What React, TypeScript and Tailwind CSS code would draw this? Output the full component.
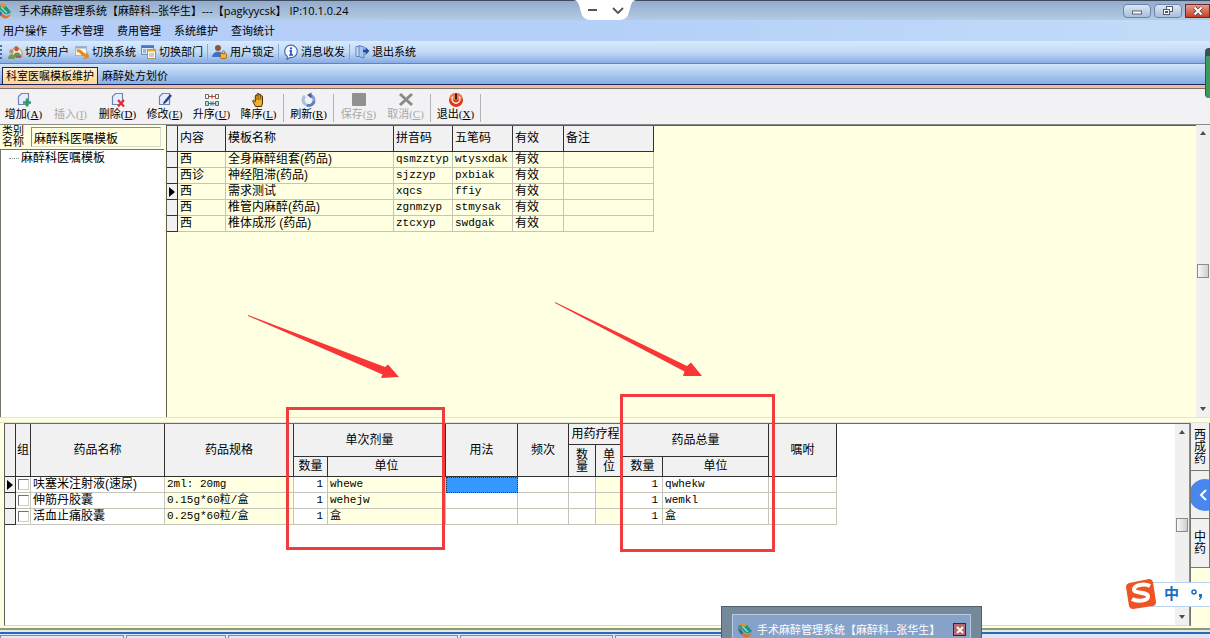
import type { ReactNode } from "react";

const MENUS = ["用户操作", "手术管理", "费用管理", "系统维护", "查询统计"];

const TEMPLATES = [
  { kind: "西", name: "全身麻醉组套(药品)", pinyin: "qsmzztyp", wubi: "wtysxdak" },
  { kind: "西诊", name: "神经阻滞(药品)", pinyin: "sjzzyp", wubi: "pxbiak" },
  { kind: "西", name: "需求测试", pinyin: "xqcs", wubi: "ffiy" },
  { kind: "西", name: "椎管内麻醉(药品)", pinyin: "zgnmzyp", wubi: "stmysak" },
  { kind: "西", name: "椎体成形 (药品)", pinyin: "ztcxyp", wubi: "swdgak" },
];

const DRUGS = [
  { name: "呋塞米注射液(速尿)", spec: "2ml: 20mg", unit: "whewe", total: "qwhekw" },
  { name: "伸筋丹胶囊", spec: "0.15g*60粒/盒", unit: "wehejw", total: "wemkl" },
  { name: "活血止痛胶囊", spec: "0.25g*60粒/盒", unit: "盒", total: "盒" },
];

const TASKS = ["w-[124px]", "w-[100px]", "w-[230px]", "w-[153px]", "w-[180px]"];

const HEAD = "border-r border-b border-[#303030] bg-[#f1f1f2] p-0 font-normal";
const CELL = "h-4 overflow-hidden border-r border-b border-[#c4c4b8] p-0 pl-0.5 whitespace-nowrap";
const MARK = "h-4 border-r border-b border-[#303030] bg-[#f1f1f2] p-0";
const MONO = "font-['Liberation_Mono','Noto_Sans_CJK_SC',monospace] text-[11px]";

/* ---------- icons ---------- */

function AppLogo() {
  return (
    <svg viewBox="0 0 16 16" className="size-4 shrink-0">
      <path d="M1 4C4 0 8 0 10 3L15 9C12 12 9 12 7 9Z" fill="#14977f" />
      <path d="M1 4C4 0 8 0 10 3L8 5C6 3 4 3 1 4Z" fill="#e8913a" />
      <path d="M1 5L7 11C10 14 13 13 15 10C14 15 9 17 6 14L2 10Z" fill="#e0702c" />
      <path d="M1 5L6 10L5 13L2 10Z" fill="#2e6d9e" />
      <path d="M5 4L11 10" stroke="#8fe0c0" strokeWidth="1.5" />
    </svg>
  );
}

function Icon({ children }: { children: ReactNode }) {
  return (
    <svg viewBox="0 0 16 16" className="size-4 shrink-0" fill="none">
      {children}
    </svg>
  );
}

const swapUser = (
  <Icon>
    <path d="M4 7l5-5 6 5v6H6Z" fill="#f4e6d4" stroke="#c08a6c" />
    <circle cx="9.500" cy="5" r="2.300" fill="#c8543c" />
    <path d="M6 13C6 7 14 7 14.500 13Z" fill="#5b9a5a" />
    <circle cx="4.500" cy="7.500" r="2.200" fill="#c89068" />
    <path d="M1 15C1 9 8 9 8 15Z" fill="#6f9a5c" />
    <path d="M9 13h5" stroke="#c33b3b" strokeWidth="1.400" />
  </Icon>
);
const swapSystem = (
  <Icon>
    <rect x="1.500" y="2.500" width="11" height="9" fill="#fff4d8" stroke="#a8b4cc" />
    <path d="M1.500 3.500h11" stroke="#8fb0dc" strokeWidth="2" />
    <path d="M3 7C8 5 7 12 12 11" stroke="#e8871c" strokeWidth="3" />
    <path d="M9 15l6-1-1-6Z" fill="#e8871c" />
  </Icon>
);
const swapDept = (
  <Icon>
    <rect x="0.500" y="1.500" width="12" height="9" fill="#dfe8f7" stroke="#6b86b8" />
    <path d="M1 3h12" stroke="#4678c8" strokeWidth="2" />
    <path d="M2 6h3M2 8h3" stroke="#5d7fb4" />
    <rect x="6.500" y="5.500" width="8" height="9" fill="#fff8e2" stroke="#a59468" />
    <path d="M6.500 6.500h8" stroke="#e2a83a" strokeWidth="2" />
    <path d="M8 10h5M8 12h5" stroke="#93a0b8" />
  </Icon>
);
const lockUser = (
  <Icon>
    <circle cx="6" cy="4" r="3" fill="#8a5a38" />
    <path d="M0 13C1 6 11 6 12 13Z" fill="#3f6fc4" />
    <rect x="8.500" y="9.500" width="6" height="5" rx="1" fill="#f0b43a" stroke="#a2701c" />
    <path d="M10 9V8a1.600 1.600 0 0 1 3 0v1" stroke="#8c7040" />
  </Icon>
);
const message = (
  <Icon>
    <path
      d="M8 1.200a6.200 6.200 0 1 1-1 12.300L4 15.500l.4-3A6.200 6.200 0 0 1 8 1.200Z"
      fill="#f4f9ff"
      stroke="#4a6fae"
      strokeWidth="1.200"
    />
    <path d="M8 3.500v1.800" stroke="#1c4fae" strokeWidth="2" />
    <path d="M6.500 6.800H8v4M6.300 11h3.600" stroke="#1c4fae" strokeWidth="1.600" />
  </Icon>
);
const leave = (
  <Icon>
    <path d="M2 2.500h4v10H2Z" fill="#cfe0f6" stroke="#5f84bc" />
    <path d="M5 1.500l5 1.500V14l-5-1.500Z" fill="#a8c6ee" stroke="#5f84bc" />
    <path d="M9 7h4" stroke="#1e4fa4" strokeWidth="2.400" />
    <path d="M11.500 3l4 4-4 4Z" fill="#1e4fa4" />
  </Icon>
);

const page = <path d="M5.500 1.500h7v11h-10v-8Z" fill="#e6eefb" stroke="#6d84b8" strokeWidth="1.200" />;

const addIcon = (
  <Icon>
    {page}
    <path d="M11 6.500v8M7 10.500h8" stroke="#2c9b62" strokeWidth="2.600" />
  </Icon>
);
const deleteIcon = (
  <Icon>
    {page}
    <path d="M8 8l6 6.500M14 8l-6 6.500" stroke="#e02c34" strokeWidth="2.200" />
  </Icon>
);
const editIcon = (
  <Icon>
    {page}
    <path d="M14 3L8 10" stroke="#27448c" strokeWidth="2.600" />
    <path d="M7 9l2 2-3 1Z" fill="#1b2550" />
  </Icon>
);
const ascIcon = (
  <Icon>
    <path d="M1.500 2.500h3v4h-3ZM11.500 2.500h3v4h-3Z" fill="#fff" stroke="#6a6a62" />
    <path d="M1.500 9.500h3v4h-3ZM11.500 9.500h3v4h-3Z" fill="#bfe0dc" stroke="#46736f" />
    <path d="M5 4.500h6M8 2.500v4" stroke="#b8493c" strokeWidth="1.200" />
    <path d="M5 11.500h6M7 9.500v4M9 9.500v4" stroke="#3a7890" strokeWidth="1.200" />
  </Icon>
);
const handIcon = (
  <Icon>
    <path
      d="M4.500 14.500L1.800 9.500c-.5-1.200.8-1.800 1.500-.8l1 1.200V4c0-1.300 1.600-1.300 1.700 0V2.300c0-1.300 1.800-1.300 1.800 0V3c0-1.200 1.900-1.200 1.900 0v1.500c0-1.100 1.800-1.100 1.800 0V11c0 1.500-.8 2.500-1 3.500Z"
      fill="#f3b020"
      stroke="#4a3208"
    />
    <path d="M6 4v4M7.800 3v5M9.700 4v4" stroke="#6a480c" strokeWidth="0.800" />
  </Icon>
);
const refreshIcon = (
  <Icon>
    <path d="M4 4A5 5 0 0 0 5 12.500" stroke="#a9bfe4" strokeWidth="3" />
    <path d="M5.500 12.800A5 5 0 0 0 13 8.500" stroke="#5c80c4" strokeWidth="3" />
    <path d="M13 8.500a5 5 0 0 0-3-5" stroke="#7c98cc" strokeWidth="2.600" />
    <path d="M10.500 0.500L6 3l4.500 3.500Z" fill="#3c5fa8" />
  </Icon>
);
const saveIcon = (
  <Icon>
    <rect x="1" y="1" width="14" height="13" rx="1" fill="#919191" />
  </Icon>
);
const cancelIcon = (
  <Icon>
    <path d="M2 2l12 11M14 2L2 13" stroke="#8a8a8a" strokeWidth="3" />
  </Icon>
);
const powerIcon = (
  <Icon>
    <circle cx="8" cy="8" r="7" fill="#dd3a1e" />
    <path d="M1.500 6a6.700 6.700 0 0 1 13 0C11 9 5 9 1.500 6Z" fill="#ee7848" />
    <path d="M5 4.500a4 4 0 1 0 6 0" stroke="#fbe4d8" strokeWidth="1.500" />
    <path d="M8 1.500v6" stroke="#4c1c10" strokeWidth="2" />
  </Icon>
);

/* ---------- shared pieces ---------- */

function ToolLink({ icon, label }: { icon: ReactNode; label: string }) {
  return (
    <button type="button" className="flex items-center gap-0.5">
      {icon}
      {label}
    </button>
  );
}

function ToolSep() {
  return <span className="-mx-px h-4 w-px bg-[#8aa6d4]" />;
}

function Action({
  icon,
  label,
  hotkey,
  disabled = false,
}: {
  icon?: ReactNode;
  label: string;
  hotkey: string;
  disabled?: boolean;
}) {
  return (
    <button
      type="button"
      disabled={disabled}
      className="flex w-[47px] flex-col items-center whitespace-nowrap disabled:text-[#a8a8a8]"
    >
      <span className="flex h-4 w-4">{icon}</span>
      <span className="leading-3">
        {label}
        <span className="font-['Liberation_Serif',serif]">
          (<u>{hotkey}</u>)
        </span>
      </span>
    </button>
  );
}

function ActionSep() {
  return <span className="mx-px h-7 w-px self-center bg-[#b4b4b4]" />;
}

function Pointer() {
  return (
    <svg viewBox="0 0 6 10" className="mx-auto h-2.5 w-1.5">
      <path d="M0 0L6 5L0 10Z" fill="#000" />
    </svg>
  );
}

function Scrollbar({ above, below }: { above: string; below: string }) {
  return (
    <div className="flex w-3.5 shrink-0 flex-col items-center bg-[#f0f0f1] py-1.5">
      <svg viewBox="0 0 6 4" className="h-1 w-1.5">
        <path d="M0 4L3 0L6 4Z" fill="#4c4c4c" />
      </svg>
      <span className={above} />
      <span className="h-3.5 w-3 shrink-0 border border-[#8d8d8d] bg-linear-to-r from-[#f8f8f8] to-[#cfcfcf]" />
      <span className={below} />
      <svg viewBox="0 0 6 4" className="h-1 w-1.5">
        <path d="M0 0L3 4L6 0Z" fill="#4c4c4c" />
      </svg>
    </div>
  );
}

/* ---------- page sections ---------- */

function TitleBar() {
  const box =
    "flex h-3.5 w-7 items-center justify-center rounded-sm border border-[#6d84a8] bg-linear-to-b from-[#dbe6f3] to-[#a9bfdc]";
  return (
    <header className="flex h-5 shrink-0 items-center border-t border-[#3c4c5c] bg-linear-to-b from-[#93acce] to-[#b3cbe2]">
      <span className="-ml-1">
        <AppLogo />
      </span>
      <h1 className="ml-[7px] flex-1 font-['Open_Sans','Noto_Sans_CJK_SC',sans-serif] whitespace-pre">
        手术麻醉管理系统【麻醉科--张华生】---【pagkyycsk】 IP:10.1.0.24
      </h1>
      <div className="flex gap-[3px]">
        <button type="button" aria-label="最小化" className={box}>
          <svg viewBox="0 0 12 10" className="h-2.5 w-3">
            <rect x="1.500" y="5" width="9" height="3" fill="#fff" stroke="#5a6678" />
          </svg>
        </button>
        <button type="button" aria-label="还原" className={box}>
          <svg viewBox="0 0 12 10" className="h-2.5 w-3" fill="#fff" stroke="#4e5a6c">
            <rect x="4.500" y="0.500" width="6" height="5" />
            <rect x="1.500" y="3.500" width="6" height="5" />
            <rect x="3.500" y="5.500" width="2" height="1" />
          </svg>
        </button>
        <button
          type="button"
          aria-label="关闭"
          className="flex h-3.5 w-[25px] items-center justify-center border border-[#6b2a24] bg-linear-to-b from-[#e59a8c] to-[#c43c26]"
        >
          <svg viewBox="0 0 10 10" className="size-2.5">
            <path d="M1.500 1.500l7 7M8.500 1.500l-7 7" stroke="#5c3a3a" strokeWidth="3.600" />
            <path d="M1.500 1.500l7 7M8.500 1.500l-7 7" stroke="#fff" strokeWidth="2.200" />
          </svg>
        </button>
      </div>
    </header>
  );
}

function Sidebar() {
  return (
    <aside className="flex w-[164px] shrink-0 flex-col">
      <div className="flex h-6 items-center gap-[7px] pl-0.5">
        <label htmlFor="category" className="w-[22px] text-[11px] leading-[11px]">
          类别名称
        </label>
        <input
          id="category"
          defaultValue="麻醉科医嘱模板"
          className="h-5 w-[130px] border border-t-[#8a8a80] border-r-[#dcdccc] border-b-[#dcdccc] border-l-[#8a8a80] bg-[#ffffe1] px-0.5 text-[12px]"
        />
      </div>
      <ul className="flex-1 border-t border-l border-[#75756c] bg-white pl-2">
        <li className="flex items-center gap-0.5 text-[12px] leading-4">
          <span className="w-2.5 border-t border-dotted border-[#909090]" />
          麻醉科医嘱模板
        </li>
      </ul>
    </aside>
  );
}

function TemplateTable() {
  return (
    <table className="w-[487px] table-fixed border-separate border-spacing-0 text-left text-[12px] leading-[15px]">
      <colgroup>
        <col className="w-[11px]" />
        <col className="w-12" />
        <col className="w-[168px]" />
        <col className="w-[59px]" />
        <col className="w-[60px]" />
        <col className="w-[51px]" />
        <col className="w-[90px]" />
      </colgroup>
      <thead>
        <tr className="h-[26px]">
          <th className={HEAD} />
          {["内容", "模板名称", "拼音码", "五笔码", "有效", "备注"].map((h) => (
            <th key={h} className={HEAD}>
              <span className="pl-0.5">{h}</span>
            </th>
          ))}
        </tr>
      </thead>
      <tbody>
        {TEMPLATES.map((t) => (
          <tr key={t.pinyin}>
            <td className={MARK}>{t.pinyin === "xqcs" && <Pointer />}</td>
            <td className={CELL}>{t.kind}</td>
            <td className={CELL}>{t.name}</td>
            <td className={`${CELL} ${MONO}`}>{t.pinyin}</td>
            <td className={`${CELL} ${MONO}`}>{t.wubi}</td>
            <td className={CELL}>有效</td>
            <td className={CELL} />
          </tr>
        ))}
      </tbody>
    </table>
  );
}

function DrugTable() {
  return (
    <table className="w-[832px] table-fixed border-separate border-spacing-0 text-center text-[12px] leading-[15px]">
      <colgroup>
        <col className="w-[11px]" />
        <col className="w-[15px]" />
        <col className="w-[134px]" />
        <col className="w-[129px]" />
        <col className="w-[34px]" />
        <col className="w-[118px]" />
        <col className="w-[72px]" />
        <col className="w-[51px]" />
        <col className="w-[27px]" />
        <col className="w-[27px]" />
        <col className="w-[40px]" />
        <col className="w-[106px]" />
        <col className="w-[68px]" />
      </colgroup>
      <thead>
        <tr className="h-[21px]">
          <th rowSpan={3} className={HEAD} />
          <th rowSpan={3} className={HEAD}>组</th>
          <th rowSpan={3} className={HEAD}>药品名称</th>
          <th rowSpan={3} className={HEAD}>药品规格</th>
          <th rowSpan={2} colSpan={2} className={HEAD}>单次剂量</th>
          <th rowSpan={3} className={HEAD}>用法</th>
          <th rowSpan={3} className={HEAD}>频次</th>
          <th colSpan={2} className={`${HEAD} whitespace-nowrap`}>用药疗程</th>
          <th rowSpan={2} colSpan={2} className={HEAD}>药品总量</th>
          <th rowSpan={3} className={HEAD}>嘱咐</th>
        </tr>
        <tr className="h-3">
          <th rowSpan={2} className={`${HEAD} px-1.5 leading-3`}>数量</th>
          <th rowSpan={2} className={`${HEAD} px-1.5 leading-3`}>单位</th>
        </tr>
        <tr className="h-5">
          <th className={HEAD}>数量</th>
          <th className={HEAD}>单位</th>
          <th className={HEAD}>数量</th>
          <th className={HEAD}>单位</th>
        </tr>
      </thead>
      <tbody className="text-left">
        {DRUGS.map((d, i) => (
          <tr key={d.name}>
            <td className={MARK}>{i === 0 && <Pointer />}</td>
            <td className="h-4 border-r border-b border-[#c4c4b8] p-0">
              <input
                type="checkbox"
                aria-label={`组 ${d.name}`}
                className="mx-auto block size-[11px] appearance-none border border-t-[#707070] border-r-[#d0d0d0] border-b-[#d0d0d0] border-l-[#707070] bg-white"
              />
            </td>
            <td className={CELL}>{d.name}</td>
            <td className={`${CELL} ${MONO} bg-[#ffffe1]`}>{d.spec}</td>
            <td className={`${CELL} ${MONO} pr-1 text-right`}>1</td>
            <td className={`${CELL} ${MONO} bg-[#ffffe1]`}>{d.unit}</td>
            <td className={i === 0 ? "border border-dotted border-[#1c3c64] bg-[#3399ff] p-0" : CELL} />
            <td className={CELL} />
            <td className={CELL} />
            <td className={`${CELL} bg-[#ffffe1]`} />
            <td className={`${CELL} ${MONO} pr-1 text-right`}>1</td>
            <td className={`${CELL} ${MONO}`}>{d.total}</td>
            <td className={CELL} />
          </tr>
        ))}
      </tbody>
    </table>
  );
}

function SideTabs() {
  const tab = "flex w-full items-center justify-center border-r border-b border-[#77776e] bg-[#f1f1f2]";
  return (
    <nav className="flex w-5 shrink-0 flex-col border-l border-[#77776e] text-[12px] leading-3">
      <button type="button" className={`${tab} h-12`}>
        <span className="w-3">西成药</span>
      </button>
      <button type="button" aria-label="展开" className={`${tab} h-12 justify-end overflow-hidden`}>
        <span className="-mr-3 flex size-8 shrink-0 items-center rounded-full bg-[#4a86f0] pl-2.5">
          <svg viewBox="0 0 8 12" className="h-3 w-2" fill="none">
            <path d="M7 1L2 6l5 5" stroke="#fff" strokeWidth="2" />
          </svg>
        </span>
      </button>
      <button type="button" className={`${tab} h-[49px]`}>
        <span className="w-3">中药</span>
      </button>
    </nav>
  );
}

/** Red frames and arrows drawn over both grids. */
function Annotations() {
  return (
    <svg width="800" height="560" className="pointer-events-none absolute top-0 left-0 max-w-none" fill="none">
      <rect x="287.500" y="408.500" width="156" height="140" stroke="#f03c3c" strokeWidth="3" />
      <rect x="621.500" y="395.500" width="152" height="155" stroke="#f03c3c" strokeWidth="3" />
      <path d="M248 315L385 367L388 364.500L399 377L381 378L382.500 374.500L248 316Z" fill="#f93636" />
      <path d="M555 302L687 366L691 362.500L702 376L683 376L684.500 371.500L555 303Z" fill="#f93636" />
    </svg>
  );
}

function InputMethodBar() {
  return (
    <div className="absolute right-0 bottom-7 flex h-8 items-center">
      <svg viewBox="0 0 32 32" className="z-10 -mr-2 size-8">
        <path d="M3 5L23 1Q26 1 27 4L30 24Q30 27 27 28L7 31Q4 31 3 28L0 9Q0 6 3 5Z" fill="#ee5423" />
        <path
          d="M24 8C18 5 8 7 8 11.500C8 16 22 13.500 22 18.500C22 23 11 24 6 21"
          stroke="#fff"
          strokeWidth="4"
          fill="none"
        />
      </svg>
      <div className="flex h-[25px] w-[60px] items-center gap-3 border-y border-[#b8d4f0] bg-white pl-3.5 text-[15px] font-bold text-[#1a6fc4]">
        中
        <svg viewBox="0 0 12 12" className="size-3">
          <circle cx="3" cy="4" r="2" fill="none" stroke="#1a6fc4" strokeWidth="1.500" />
          <path d="M8 6h3v3l-2 3H8l1-3H8Z" fill="#1a6fc4" />
        </svg>
      </div>
    </div>
  );
}

function WindowPreview() {
  return (
    <div className="absolute bottom-0 left-[721px] h-8 w-[261px] border border-b-0 border-[#4f5f70] bg-[#75899b] px-2.5 pt-[7px]">
      <div className="flex h-6 items-center gap-1 border border-b-0 border-[#b8cbe2] bg-[#86a2c8] pt-1.5 pr-1 pl-1 text-white">
        <AppLogo />
        <span className="flex-1 whitespace-nowrap">手术麻醉管理系统【麻醉科--张华生】</span>
        <button
          type="button"
          aria-label="关闭预览"
          className="flex size-[13px] items-center justify-center border border-[#501c20] bg-[#b46a70]"
        >
          <svg viewBox="0 0 8 8" className="size-2">
            <path d="M1 1l6 6M7 1L1 7" stroke="#fff" strokeWidth="1.800" />
          </svg>
        </button>
      </div>
    </div>
  );
}

export default function App() {
  return (
    <div className="relative flex h-screen flex-col overflow-hidden bg-[#ffffe1] font-['Liberation_Sans','Noto_Sans_CJK_SC',sans-serif] text-[11px] leading-4 text-black">
      <TitleBar />

      <nav className="flex h-[21px] shrink-0 items-center gap-[13px] bg-linear-to-r from-[#b5cdf8] via-[#b4d0f8] to-[#c2dcf8] pl-[3px]">
        {MENUS.map((m) => (
          <button key={m} type="button">
            {m}
          </button>
        ))}
      </nav>

      <div className="flex h-[23px] shrink-0 items-center gap-[5px] border-b border-[#5f86bc] bg-linear-to-b from-[#d8eafc] via-[#c3dbf6] to-[#88abe4]">
        <span className="h-3.5 w-0.5 border-r-2 border-dotted border-[#4a6ca4]" />
        <ToolLink icon={swapUser} label="切换用户" />
        <ToolLink icon={swapSystem} label="切换系统" />
        <ToolLink icon={swapDept} label="切换部门" />
        <ToolSep />
        <ToolLink icon={lockUser} label="用户锁定" />
        <ToolSep />
        <ToolLink icon={message} label="消息收发" />
        <ToolSep />
        <ToolLink icon={leave} label="退出系统" />
      </div>

      {/* Document tabs */}
      <div className="flex h-[21px] shrink-0 items-end border-b border-[#1c2460] bg-linear-to-b from-[#d3e6fb] to-[#86aee6] pl-0.5">
        <button
          type="button"
          className="h-[17px] border border-b-0 border-[#1c2460] bg-linear-to-b from-[#fff0cc] to-[#ffd792] px-[3px]"
        >
          科室医嘱模板维护
        </button>
        <button type="button" className="h-[17px] px-1">
          麻醉处方划价
        </button>
      </div>
      <div className="h-1 shrink-0 border-b border-[#7c7468] bg-[#f2bd9c]" />

      {/* Record actions */}
      <div className="flex h-9 shrink-0 border-b border-[#8a8a8a] bg-[#f2f1f3] pt-[3px]">
        <Action icon={addIcon} label="增加" hotkey="A" />
        <Action label="插入" hotkey="I" disabled />
        <Action icon={deleteIcon} label="删除" hotkey="D" />
        <Action icon={editIcon} label="修改" hotkey="E" />
        <Action icon={ascIcon} label="升序" hotkey="U" />
        <Action icon={handIcon} label="降序" hotkey="L" />
        <ActionSep />
        <Action icon={refreshIcon} label="刷新" hotkey="R" />
        <ActionSep />
        <Action icon={saveIcon} label="保存" hotkey="S" disabled />
        <Action icon={cancelIcon} label="取消" hotkey="C" disabled />
        <ActionSep />
        <Action icon={powerIcon} label="退出" hotkey="X" />
        <ActionSep />
      </div>

      <main className="flex min-h-0 flex-1 flex-col">
        <div className="flex min-h-0 flex-[293]">
          <Sidebar />
          <div className="ml-0.5 flex-1 border-t border-l border-[#5c5c58]">
            <TemplateTable />
          </div>
          <Scrollbar above="flex-1" below="flex-1" />
        </div>
        <div className="h-1.5 shrink-0 border-y border-[#e4e4d4]" />
        <div className="flex min-h-0 flex-[203]">
          <div className="ml-1 flex flex-1 border-t border-r border-b border-l border-t-[#6c6c66] border-r-[#8a8a80] border-b-[#d8d8d8] border-l-[#5c5c58] bg-white">
            <div className="flex-1">
              <DrugTable />
            </div>
            <Scrollbar above="flex-1" below="flex-1" />
          </div>
          <SideTabs />
        </div>
      </main>

      {/* Window edge and task bar */}
      <div className="h-1 shrink-0 border-b-2 border-[#8b9c7a]" />
      <div className="h-0.5 shrink-0 bg-[#e8e8e0]" />
      <footer className="flex h-1.5 shrink-0 gap-0.5 border-t-2 border-[#2f66bc] bg-[#d8eafa] pt-px">
        {TASKS.map((w) => (
          <span key={w} className={`${w} border border-b-0 border-[#6b93c0] bg-[#dcebfa]`} />
        ))}
      </footer>

      <Annotations />
      <InputMethodBar />
      <WindowPreview />

      {/* Session handle of the remote desktop */}
      <div className="absolute top-0 left-[573px] flex h-5 w-16 items-center justify-center">
        <svg viewBox="0 0 64 20" className="h-5 w-16" fill="none">
          <path d="M0 0C6 0 6 6 8 12Q10 20 17 20H47Q54 20 56 12C58 6 58 0 64 0Z" fill="#fff" />
          <path d="M15 10h9M40 8l5 5 5-5" stroke="#555" strokeWidth="1.800" />
        </svg>
      </div>
      <div className="absolute top-12 right-0 h-[50px] w-[5px] rounded-l-sm border-t-8 border-l border-[#3c4c58] bg-[#3c9c5c]" />
    </div>
  );
}
